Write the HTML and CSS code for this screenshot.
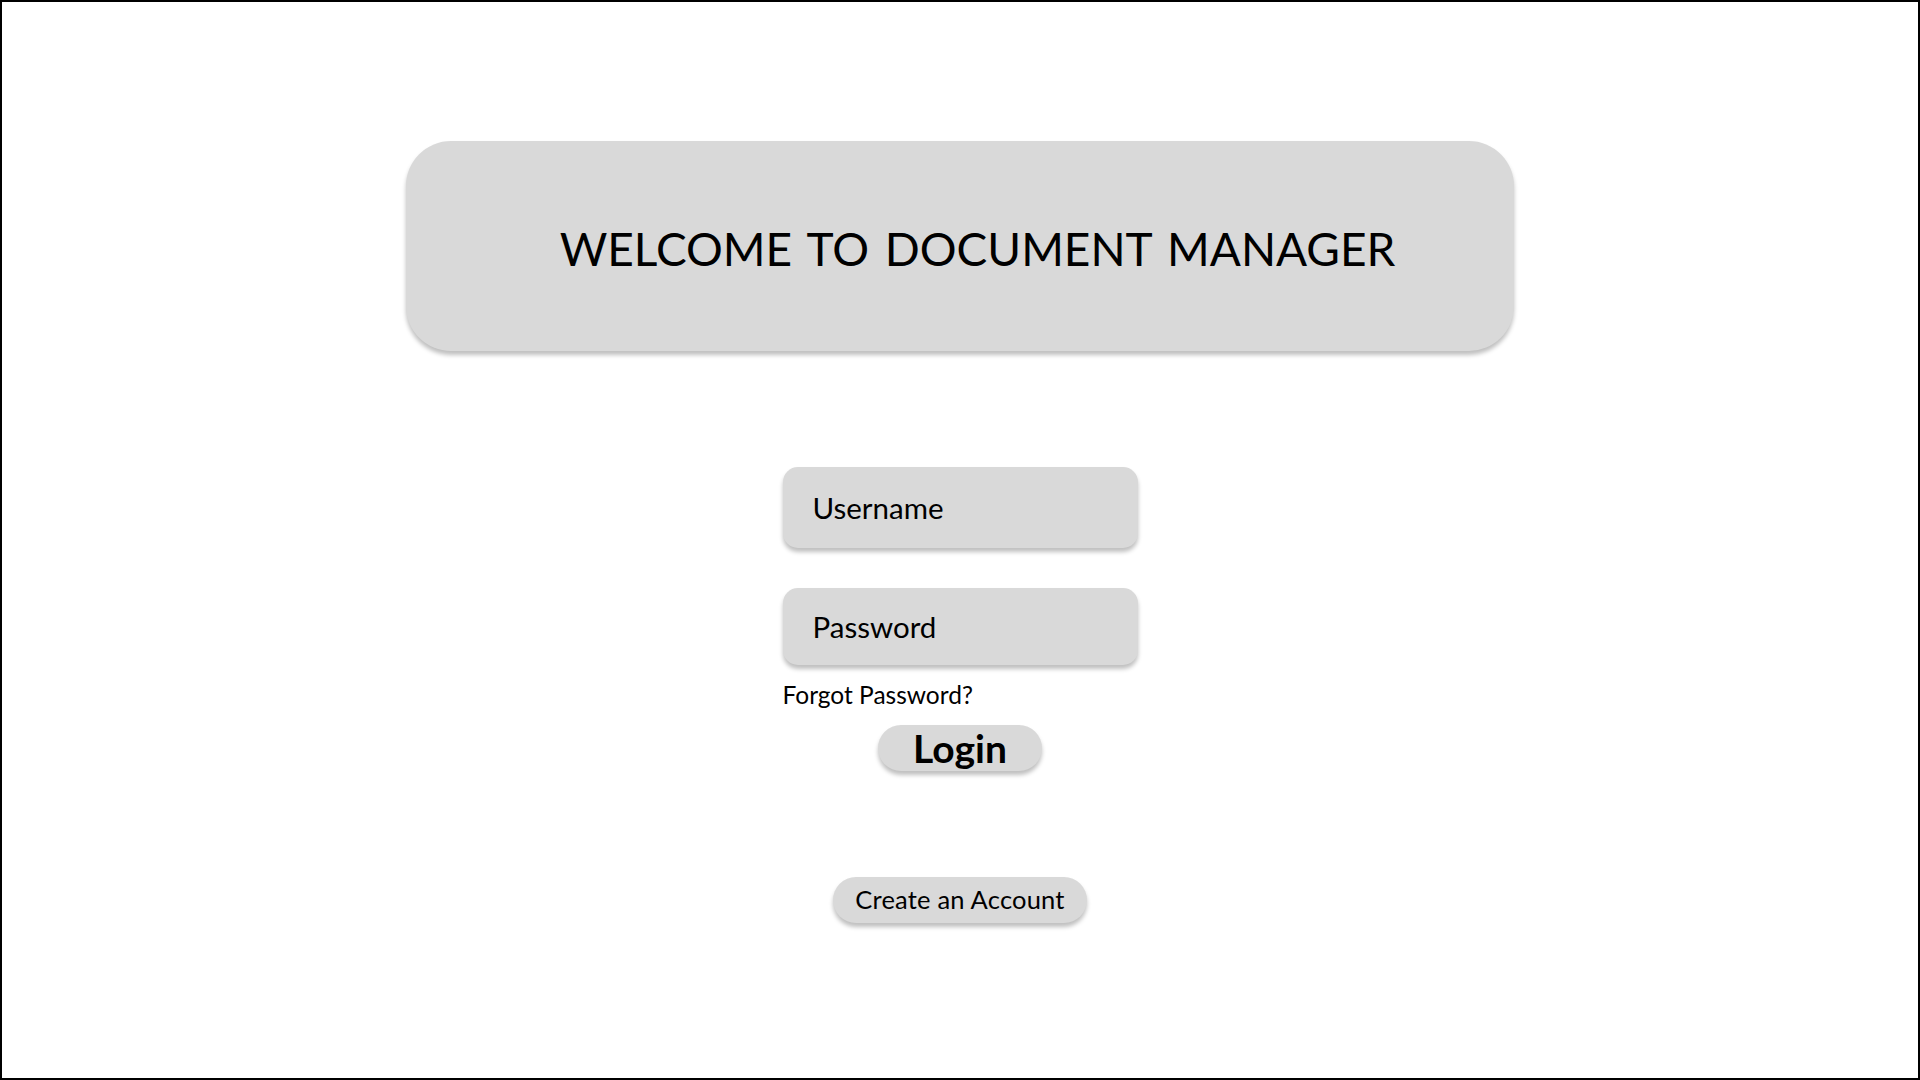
FILE: index.html
```html
<!DOCTYPE html>
<html lang="en">
<head>
<meta charset="utf-8">
<title>Document Manager</title>
<link rel="stylesheet" href="styles.css">
</head>
<body>
<main class="frame">
  <header class="banner">
    <h1 class="banner-title">WELCOME TO DOCUMENT MANAGER</h1>
  </header>
  <form class="login-form" onsubmit="return false;">
    <div class="field field-user"><span class="field-text">Username</span></div>
    <div class="field field-pass"><span class="field-text">Password</span></div>
    <a class="forgot" href="#">Forgot Password?</a>
    <button class="btn btn-login" type="button">Login</button>
    <button class="btn btn-create" type="button">Create an Account</button>
  </form>
</main>
</body>
</html>
```
FILE: styles.css
```css
html, body {
  margin: 0;
  padding: 0;
  background: #ffffff;
}

body {
  font-family: "Lato", "Open Sans", sans-serif;
  color: #000000;
}

.frame {
  box-sizing: border-box;
  width: 1920px;
  height: 1080px;
  border: 2px solid #000000;
  display: flex;
  flex-direction: column;
  align-items: center;
  padding-top: 139px;
}

.banner {
  box-sizing: border-box;
  width: 1108px;
  height: 210px;
  background: #d9d9d9;
  border-radius: 45px;
  box-shadow: 0 4px 4px rgba(0, 0, 0, 0.25);
  display: flex;
  align-items: center;
  justify-content: center;
  padding-left: 35px;
  padding-top: 6px;
}

.banner-title {
  margin: 0;
  font-size: 46px;
  font-weight: 400;
  line-height: 1;
  letter-spacing: 0;
  word-spacing: 4px;
}

.login-form {
  margin-top: 116px;
  width: 355px;
  display: flex;
  flex-direction: column;
}

.field {
  box-sizing: border-box;
  background: #d9d9d9;
  border-radius: 15px;
  box-shadow: 0 4px 4px rgba(0, 0, 0, 0.25);
  display: flex;
  align-items: center;
  padding-left: 30px;
  font-size: 29.5px;
  line-height: 1;
}

.field-user {
  height: 81px;
}

.field-pass {
  height: 77px;
  margin-top: 40px;
}

.forgot {
  margin-top: 18px;
  font-size: 24.5px;
  line-height: 24px;
  color: #000000;
  text-decoration: none;
  align-self: flex-start;
}

.btn {
  box-sizing: border-box;
  align-self: center;
  border: none;
  background: #d9d9d9;
  box-shadow: 0 4px 4px rgba(0, 0, 0, 0.25);
  font-family: "Lato", "Open Sans", sans-serif;
  color: #000000;
  padding: 0;
  height: 46px;
  border-radius: 23px;
  display: flex;
  align-items: center;
  justify-content: center;
  cursor: pointer;
}

.btn-login {
  margin-top: 18px;
  width: 164px;
  font-size: 39px;
  font-weight: 700;
  line-height: 1;
}

.btn-create {
  margin-top: 106px;
  width: 254px;
  font-size: 25.5px;
  line-height: 1;
  letter-spacing: 0.2px;
}
```
